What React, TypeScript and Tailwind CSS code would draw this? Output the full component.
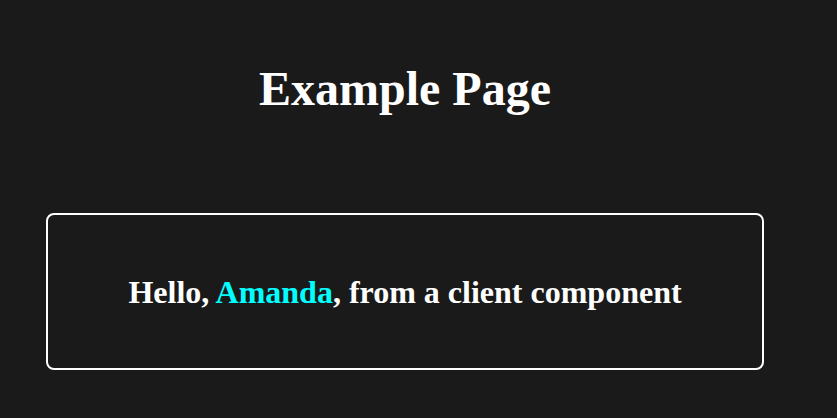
export default function App() {
  return (
    <main className="min-h-screen w-full bg-[#1a1a1a] text-white font-['Liberation_Serif',serif]">
      <div className="w-[810px] pt-[65px]">
        <h1 className="text-center text-[48px] font-bold leading-[48px]">Example Page</h1>
        <section className="mx-[46px] mt-[100px] flex h-[157px] items-center justify-center rounded-lg border-2 border-white">
          <p className="text-[32px] font-bold leading-[32px]">
            Hello, <span className="text-[#00ffff]">Amanda</span>, from a client component
          </p>
        </section>
      </div>
    </main>
  );
}
